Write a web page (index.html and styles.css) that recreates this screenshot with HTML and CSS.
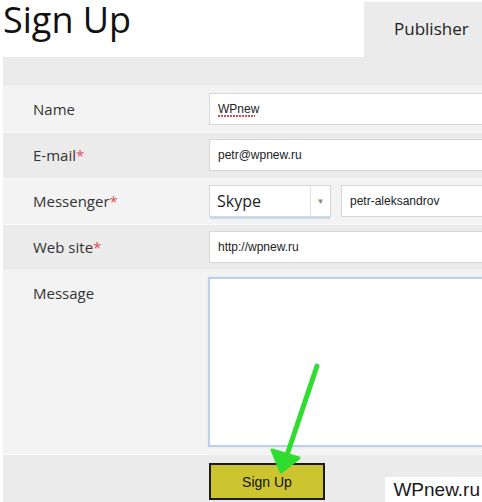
FILE: index.html
```html
<!DOCTYPE html>
<html lang="en">
<head>
  <meta charset="UTF-8">
  <meta name="viewport" content="width=device-width, initial-scale=1">
  <title>Sign Up</title>
  <link rel="stylesheet" href="styles.css">
</head>
<body>
  <header class="top">
    <h1 class="title">Sign Up</h1>
    <div class="tab">Publisher</div>
  </header>
  <div class="panel">
    <div class="band"></div>
    <form class="signup-form">
      <div class="row light">
        <label class="label">Name</label>
        <div class="field"><input class="text-input" type="text" value="WPnew"><span class="squiggle"></span></div>
      </div>
      <div class="row dark">
        <label class="label">E-mail<span class="req">*</span></label>
        <div class="field"><input class="text-input" type="text" value="petr@wpnew.ru"></div>
      </div>
      <div class="row light">
        <label class="label">Messenger<span class="req">*</span></label>
        <div class="field messenger">
          <div class="select-box">
            <span class="select-value">Skype</span>
            <span class="select-arrow">&#9660;</span>
          </div>
          <input class="text-input" type="text" value="petr-aleksandrov">
        </div>
      </div>
      <div class="row dark">
        <label class="label">Web site<span class="req">*</span></label>
        <div class="field"><input class="text-input" type="text" value="http://wpnew.ru"></div>
      </div>
      <div class="row light message-row">
        <label class="label">Message</label>
        <div class="field"><textarea class="message-box"></textarea></div>
      </div>
      <div class="actions">
        <button type="button" class="submit">Sign Up</button>
        <span class="watermark">WPnew.ru</span>
      </div>
    </form>
    <svg class="pointer" width="482" height="502" viewBox="0 0 482 502">
      <line x1="317" y1="366" x2="288" y2="452" stroke="#2fdc2f" stroke-width="5" stroke-linecap="round"/>
      <polygon points="272,450 299,458 281,472" fill="#2fdc2f" stroke="#2fdc2f" stroke-width="3" stroke-linejoin="round"/>
    </svg>
  </div>
</body>
</html>
```

FILE: styles.css
```css
:root {
  --row-light: #f3f3f3;
  --row-dark: #ebebeb;
  --field-border: #d6d6d6;
  --label-color: #333;
  --required: #d9534f;
}
body {
  margin: 0;
  padding: 0;
  background: #fff;
  font-family: 'Open Sans', sans-serif;
  color: #222;
  overflow: hidden;
}
.top {
  display: flex;
  justify-content: space-between;
  height: 57px;
}
.title {
  margin: 0;
  padding: 0 0 0 3px;
  font-size: 36px;
  font-weight: 400;
  line-height: 40px;
  color: #111;
}
.tab {
  width: 118px;
  box-sizing: border-box;
  padding-left: 30px;
  margin-top: 2px;
  background: var(--row-dark);
  font-size: 17px;
  text-align: left;
  line-height: 54px;
  color: #222;
  white-space: nowrap;
  overflow: hidden;
}
.panel {
  position: relative;
  margin-left: 3px;
}
.band {
  height: 29px;
  background: var(--row-dark);
  border-bottom: 1px solid #f7f7f7;
}
.row {
  display: flex;
  padding: 6px 0 7px;
  border-bottom: 1px solid #f8f8f8;
}
.row.light {
  background: var(--row-light);
}
.row.dark {
  background: var(--row-dark);
}
.label {
  flex: none;
  width: 176px;
  padding-left: 30px;
  font-size: 15px;
  line-height: 32px;
  color: var(--label-color);
}
.req {
  color: var(--required);
}
.field {
  position: relative;
  flex: 1;
  min-width: 0;
  display: flex;
  gap: 10px;
}
.text-input {
  flex: 1;
  height: 32px;
  box-sizing: border-box;
  border: 1px solid var(--field-border);
  border-right: none;
  background: #fff;
  padding: 0 8px;
  font-family: 'Liberation Sans', Arial, sans-serif;
  font-size: 12px;
  color: #222;
  outline: none;
  min-width: 0;
}
.squiggle {
  position: absolute;
  left: 9px;
  top: 22px;
  width: 37px;
  height: 2px;
  background: repeating-linear-gradient(90deg, #d45050 0 2px, transparent 2px 3px);
}
.select-box {
  flex: none;
  display: flex;
  width: 122px;
  height: 32px;
  box-sizing: border-box;
  border: 1px solid var(--field-border);
  background: #fff;
  box-shadow: 0 3px 0 -1px #c9d8ea;
}
.select-value {
  flex: 1;
  padding-left: 7px;
  font-size: 16px;
  line-height: 30px;
  color: #222;
}
.select-arrow {
  width: 19px;
  border-left: 1px solid #e2e2e2;
  font-size: 8px;
  line-height: 30px;
  text-align: center;
  color: #888;
}
.message-box {
  flex: 1;
  height: 170px;
  box-sizing: border-box;
  margin-left: -1px;
  border: 2px solid #bcd0e8;
  border-right: none;
  background: #fff;
  box-shadow: 0 0 2px #cfdff0;
  resize: none;
  outline: none;
}
.actions {
  display: flex;
  align-items: flex-start;
  height: 47px;
  background: var(--row-dark);
  padding-left: 206px;
}
.submit {
  margin-top: 8px;
  width: 116px;
  height: 37px;
  background: #cdc52f;
  border: 2px solid #1b1b1b;
  border-radius: 0;
  font-family: 'Liberation Sans', Arial, sans-serif;
  font-size: 14px;
  color: #111;
  cursor: pointer;
}
.watermark {
  margin-left: auto;
  align-self: flex-end;
  font-family: 'Liberation Sans', Arial, sans-serif;
  font-size: 19px;
  line-height: 25px;
  color: #1a1a1a;
  padding: 0 2px 0 8px;
  background: #fff;
}
.pointer {
  position: absolute;
  left: -3px;
  top: -57px;
  pointer-events: none;
}
```
